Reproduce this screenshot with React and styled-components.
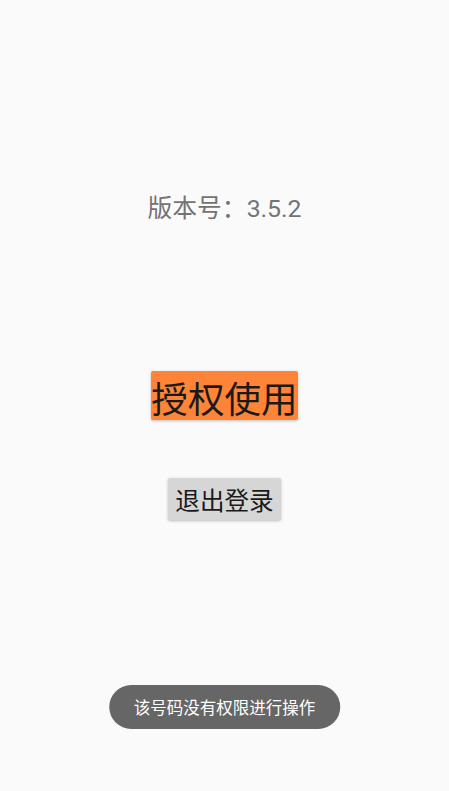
import styled, { createGlobalStyle } from "styled-components";

const GlobalStyle = createGlobalStyle`
  html, body {
    margin: 0;
    padding: 0;
    background: #fafafa;
    font-family: Roboto, "Noto Sans CJK SC", sans-serif;
  }
`;

const Page = styled.div`
  position: relative;
  min-height: 100vh;
  display: flex;
  flex-direction: column;
  align-items: center;
  padding-top: 193px;
  box-sizing: border-box;
`;

const Version = styled.div`
  font-size: 24.8px;
  line-height: 32px;
  color: #737373;
`;

const Button = styled.button`
  border: none;
  border-radius: 2px;
  padding: 0 ${(p) => p.$padX}px;
  height: ${(p) => p.$height}px;
  font-family: inherit;
  font-size: ${(p) => p.$size}px;
  color: #1a1a1a;
  background: ${(p) => p.$bg};
  box-shadow: 0 1px 3px rgba(0, 0, 0, 0.25);
  cursor: pointer;
`;

const AuthButton = styled(Button)`
  margin-top: 146px;
`;

const LogoutButton = styled(Button)`
  margin-top: 58px;
`;

const Toast = styled.div`
  position: absolute;
  left: 50%;
  top: 685px;
  transform: translateX(-50%);
  height: 44px;
  padding: 0 25px;
  border-radius: 22px;
  background: #666666;
  color: #ffffff;
  font-size: 16.5px;
  display: flex;
  align-items: center;
  white-space: nowrap;
`;

export default function App() {
  return (
    <>
      <GlobalStyle />
      <Page>
        <Version>版本号：3.5.2</Version>
        <AuthButton $bg="#ff8438" $size={36.6} $height={49} $padX={0}>
          授权使用
        </AuthButton>
        <LogoutButton $bg="#d6d6d6" $size={24.6} $height={42} $padX={7}>
          退出登录
        </LogoutButton>
        <Toast>该号码没有权限进行操作</Toast>
      </Page>
    </>
  );
}
